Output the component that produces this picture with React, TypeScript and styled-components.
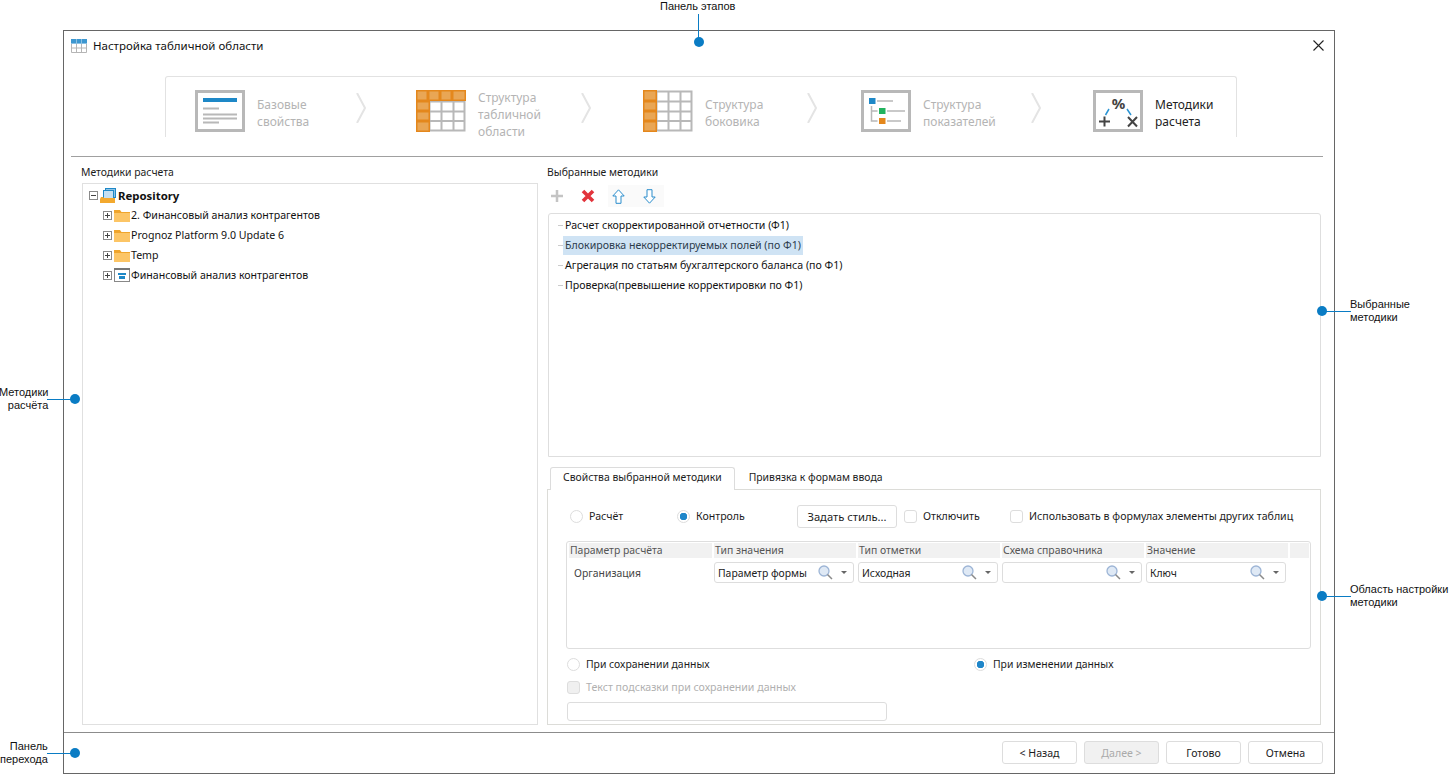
import styled, { createGlobalStyle } from 'styled-components';

const GlobalStyle = createGlobalStyle`
  html, body {
    margin: 0;
    padding: 0;
    background: #fff;
  }
  body {
    font-family: 'Noto Sans', 'Open Sans', sans-serif;
    font-size: 10.6px;
    color: #1c1c1c;
  }
`;

const Page = styled.div`
  position: relative;
  width: 1449px;
  height: 774px;
  overflow: hidden;
  padding: 30px 0 0 63px;
  box-sizing: border-box;
`;

const Dialog = styled.div`
  width: 1272px;
  height: 744px;
  box-sizing: border-box;
  border: 1px solid #666;
  display: flex;
  flex-direction: column;
`;

const TitleBar = styled.div`
  height: 31px;
  display: flex;
  align-items: center;
  gap: 6px;
  padding: 0 10px 0 7px;
  flex-shrink: 0;
`;

const TitleText = styled.span`
  flex: 1;
  font-size: 11.5px;
  line-height: 14px;
  margin-top: -2px;
  color: #111;
`;

const StepBar = styled.div`
  margin: 14px 0 0 101px;
  width: 1072px;
  height: 61px;
  box-sizing: border-box;
  border: 1px solid #e2e2e2;
  border-bottom: none;
  border-radius: 3px 3px 0 0;
  display: flex;
  padding: 13px 0 0 29px;
  flex-shrink: 0;
`;

const Step = styled.div<{ $width?: number }>`
  width: ${p => (p.$width ? `${p.$width}px` : 'auto')};
  display: flex;
  align-items: flex-start;
  gap: 12px;
  flex-shrink: 0;
`;

const StepText = styled.div<{ $active?: boolean; $tall?: boolean }>`
  font-size: 12px;
  line-height: 17px;
  color: ${p => (p.$active ? '#222' : '#b4b4b4')};
  display: flex;
  align-self: center;
  height: 51px;
  align-items: center;
  margin-top: ${p => (p.$tall ? 2 : -2)}px;
`;

const ChevronSlot = styled.div<{ $width: number }>`
  width: ${p => p.$width}px;
  flex-shrink: 0;
  padding-top: 3px;
`;

const Separator = styled.div`
  height: 1px;
  background: #a0a0a0;
  margin: 19px 11px 0 7px;
  flex-shrink: 0;
`;

const Body = styled.div`
  flex: 1;
  min-height: 0;
  display: flex;
  gap: 9px;
  padding: 8px 0 7px 17px;
`;

const LeftColumn = styled.div`
  width: 457px;
  display: flex;
  flex-direction: column;
`;

const RightColumn = styled.div`
  width: 774px;
  display: flex;
  flex-direction: column;
`;

const SectionLabel = styled.div`
  height: 18px;
  font-size: 10.4px;
  line-height: 15px;
  flex-shrink: 0;
`;

const TreeBox = styled.div`
  flex: 1;
  margin-left: 1px;
  border: 1px solid #e0e0e0;
  padding-top: 1px;
`;

const TreeRow = styled.div<{ $root?: boolean }>`
  height: 20px;
  display: flex;
  align-items: center;
  padding-left: ${p => (p.$root ? 6 : 20)}px;
  gap: 1px;
  font-size: ${p => (p.$root ? '11.4px' : 'inherit')};
  font-weight: ${p => (p.$root ? 700 : 400)};
  color: #111;
`;

const Expander = styled.span`
  width: 9px;
  height: 9px;
  box-sizing: border-box;
  border: 1px solid #8a8a8a;
  flex-shrink: 0;
  margin-right: 1px;
  display: block;
  background: linear-gradient(#444, #444) center / 5px 1px no-repeat;
`;

const ExpanderPlus = styled(Expander)`
  background:
    linear-gradient(#444, #444) center / 5px 1px no-repeat,
    linear-gradient(#444, #444) center / 1px 5px no-repeat;
`;

const Toolbar = styled.div`
  height: 30px;
  flex-shrink: 0;
  display: flex;
  align-items: center;
  padding-bottom: 4px;
  box-sizing: border-box;
`;

const ToolButton = styled.span<{ $soft?: boolean; $width: number; $pad: number }>`
  width: ${p => p.$width}px;
  height: 22px;
  display: flex;
  align-items: center;
  padding-left: ${p => p.$pad}px;
  box-sizing: border-box;
  background: ${p => (p.$soft ? '#fafafa' : 'transparent')};
`;

const ListBox = styled.div`
  height: 244px;
  margin-left: 1px;
  flex-shrink: 0;
  box-sizing: border-box;
  border: 1px solid #dedede;
  border-radius: 3px 3px 0 0;
  padding: 1px 0 0 9px;
`;

const ListRow = styled.div`
  height: 20px;
  display: flex;
  align-items: center;
  color: #111;
`;

const Dash = styled.span`
  width: 5px;
  height: 1px;
  background: #ccc;
  flex-shrink: 0;
`;

const ListText = styled.span<{ $selected?: boolean }>`
  padding: 2px 2px;
  line-height: 15px;
  background: ${p => (p.$selected ? '#cfe3f4' : 'transparent')};
  color: ${p => (p.$selected ? '#2c3c4c' : '#111')};
`;

const TabBar = styled.div`
  margin-top: 10px;
  height: 22px;
  padding-left: 3px;
  display: flex;
  flex-shrink: 0;
`;

const Tab = styled.div<{ $active?: boolean }>`
  box-sizing: border-box;
  height: ${p => (p.$active ? 23 : 22)}px;
  padding: 0 ${p => (p.$active ? 12 : 13)}px;
  font-size: 10.4px;
  line-height: 18px;
  background: #fff;
  position: relative;
  z-index: 1;
  border: ${p => (p.$active ? '1px solid #dcdcdc' : '1px solid transparent')};
  border-bottom: none;
  border-radius: 3px 3px 0 0;
`;

const Panel = styled.div`
  flex: 1;
  min-height: 0;
  border: 1px solid #dcdcd8;
  padding: 15px 0 0 18px;
`;

const OptionsRow = styled.div`
  display: flex;
  align-items: center;
  height: 23px;
  padding-left: 4px;
`;

const OptionLabel = styled.span<{ $raised?: boolean }>`
  line-height: 13px;
  margin-top: ${p => (p.$raised ? -1 : 0)}px;
`;

const Option = styled.label<{ $width?: number; $muted?: boolean; $small?: boolean }>`
  display: flex;
  align-items: center;
  gap: 6px;
  flex-shrink: 0;
  width: ${p => (p.$width ? `${p.$width}px` : 'auto')};
  font-size: ${p => (p.$small ? '10.4px' : 'inherit')};
  color: ${p => (p.$muted ? '#b0b0b0' : '#1c1c1c')};
`;

const RadioMark = styled.span<{ $on?: boolean }>`
  width: 13px;
  height: 13px;
  box-sizing: border-box;
  border-radius: 50%;
  border: 1px solid #ddd;
  background: ${p => (p.$on ? 'radial-gradient(circle, #1f86c9 0 3.5px, #fff 4px)' : '#fff')};
  flex-shrink: 0;
`;

const CheckMark = styled.span<{ $disabled?: boolean }>`
  width: 13px;
  height: 13px;
  box-sizing: border-box;
  border-radius: 3px;
  border: 1px solid #ddd;
  background: ${p => (p.$disabled ? '#f0f0f0' : '#fff')};
  flex-shrink: 0;
`;

const StyleButton = styled.div`
  width: 100px;
  height: 23px;
  box-sizing: border-box;
  border: 1px solid #ddd;
  border-radius: 3px;
  display: flex;
  align-items: center;
  justify-content: center;
  margin-right: 7px;
  flex-shrink: 0;
  font-size: 11.2px;
`;

const ParamGrid = styled.div`
  margin-top: 13px;
  width: 745px;
  height: 108px;
  box-sizing: border-box;
  border: 1px solid #dedede;
  border-radius: 3px;
  padding: 1px 1px 0 2px;
  font-size: 10.4px;
`;

const GridRow = styled.div`
  display: grid;
  grid-template-columns: 143px 142px 142px 142px 142px 1fr;
  column-gap: 2px;
`;

const HeaderCell = styled.div`
  height: 15px;
  line-height: 15px;
  background: #f1f1f1;
  padding-left: 1px;
  color: #555;
`;

const BodyRow = styled(GridRow)`
  margin-top: 4px;
  align-items: center;
`;

const ParamName = styled.div`
  padding-left: 5px;
  color: #444;
`;

const Combo = styled.div`
  width: 140px;
  height: 21px;
  box-sizing: border-box;
  border: 1px solid #ddd;
  border-radius: 3px;
  display: flex;
  align-items: center;
  padding: 0 6px 0 3px;
  color: #222;
`;

const ComboValue = styled.span`
  flex: 1;
  white-space: nowrap;
`;

const ComboArrow = styled.span`
  width: 0;
  height: 0;
  margin-left: 8px;
  border-left: 3px solid transparent;
  border-right: 3px solid transparent;
  border-top: 3px solid #666;
`;

const TriggerRow = styled.div`
  margin-top: 6px;
  height: 18px;
  display: flex;
  align-items: center;
  padding-left: 1px;
`;

const HintRow = styled(TriggerRow)`
  margin-top: 5px;
`;

const HintInput = styled.div`
  margin: 6px 0 0 1px;
  width: 320px;
  height: 19px;
  box-sizing: border-box;
  border: 1px solid #ddd;
  border-radius: 3px;
`;

const Footer = styled.div`
  height: 41px;
  flex-shrink: 0;
  box-sizing: border-box;
  border-top: 1px solid #8c8c8c;
  display: flex;
  justify-content: flex-end;
  gap: 7px;
  padding: 8px 11px 0 0;
`;

const FooterButton = styled.div<{ $disabled?: boolean }>`
  width: 75px;
  height: 23px;
  box-sizing: border-box;
  border: 1px solid #ddd;
  border-radius: 3px;
  display: flex;
  align-items: center;
  justify-content: center;
  background: ${p => (p.$disabled ? '#f1f1f1' : '#fff')};
  color: ${p => (p.$disabled ? '#aaa' : '#1c1c1c')};
`;

const Callout = styled.div<{ $x: number; $y: number; $right?: boolean }>`
  position: absolute;
  left: ${p => p.$x}px;
  top: ${p => p.$y}px;
  font-family: 'Liberation Sans', Arial, sans-serif;
  font-size: 11px;
  line-height: 13px;
  color: #111;
  text-align: ${p => (p.$right ? 'right' : 'left')};
  white-space: nowrap;
`;

const Dot = styled.span<{ $x: number; $y: number }>`
  position: absolute;
  left: ${p => p.$x - 5}px;
  top: ${p => p.$y - 5}px;
  width: 10px;
  height: 10px;
  border-radius: 50%;
  background: #0a7cc4;
`;

const Leader = styled.span<{ $x: number; $y: number; $w: number; $h: number }>`
  position: absolute;
  left: ${p => p.$x}px;
  top: ${p => p.$y}px;
  width: ${p => p.$w}px;
  height: ${p => p.$h}px;
  background: #0a7cc4;
`;

const TableTitleIcon = () => (
  <svg width="16" height="14" viewBox="0 0 16 14" style={{ marginTop: -2 }}>
    <rect x="0" y="0" width="16" height="5" fill="#3d97d0" />
    <path d="M.5 5v8.5h15V5M.5 9h15M5.5 5v8.5M10.5 5v8.5" fill="none" stroke="#b5b5b5" />
    <path d="M5.5 0v5M10.5 0v5M0 4.5h16" stroke="#8cc0e2" />
  </svg>
);

const CloseIcon = () => (
  <svg width="11" height="11" viewBox="0 0 11 11" style={{ marginTop: -2 }}>
    <path d="M.5.5l10 10M10.5.5l-10 10" stroke="#222" strokeWidth="1.1" />
  </svg>
);

const Chevron = () => (
  <svg width="10" height="30" viewBox="0 0 10 30">
    <path d="M1 0l8 15-8 15" fill="none" stroke="#e4e4e4" strokeWidth="2" />
  </svg>
);

const IconFrame = ({ children }: { children: React.ReactNode }) => (
  <svg width="50" height="42" viewBox="0 0 50 42" style={{ flexShrink: 0 }}>
    {children}
  </svg>
);

const PropertiesIcon = () => (
  <IconFrame>
    <rect x="1.5" y="1.5" width="47" height="39" fill="#fff" stroke="#b8b8b8" strokeWidth="3" />
    <rect x="8" y="8" width="34" height="4" fill="#1e88c7" />
    <path d="M8 18.5h16M8 24.5h34M8 28.5h34M8 32.5h16" stroke="#b8b8b8" strokeWidth="2" />
  </IconFrame>
);

const GridLines = () => (
  <path
    d="M1.5 1.5h47v39h-47zM1.5 11.5h47M1.5 21.5h47M1.5 31h47M13.5 1.5v39M25.500 1.5v39M37.5 1.5v39"
    fill="#fff"
    stroke="#b8b8b8"
    strokeWidth="2"
  />
);

const OrangeCell = ({ x, y, w, h }: { x: number; y: number; w: number; h: number }) => (
  <rect x={x + 0.75} y={y + 0.75} width={w - 1.5} height={h - 1.5} fill="#e9a655" stroke="#e4871c" strokeWidth="1.5" />
);

const TableIcon = () => (
  <IconFrame>
    <GridLines />
    {[0, 12, 24, 36].map(x => (
      <OrangeCell key={x} x={x} y={0} w={x === 36 ? 14 : 12} h={11} />
    ))}
    {[11, 21, 31].map(y => (
      <OrangeCell key={y} x={0} y={y} w={14} h={y === 31 ? 11 : 10} />
    ))}
  </IconFrame>
);

const SideTableIcon = () => (
  <IconFrame>
    <GridLines />
    {[0, 11, 21, 31].map(y => (
      <OrangeCell key={y} x={0} y={y} w={14} h={y === 0 || y === 31 ? 11 : 10} />
    ))}
  </IconFrame>
);

const HierarchyIcon = () => (
  <IconFrame>
    <rect x="1.5" y="1.5" width="47" height="39" fill="#fff" stroke="#b8b8b8" strokeWidth="3" />
    <rect x="8" y="8" width="6.5" height="6" fill="#1e88c7" />
    <rect x="18" y="18" width="6.5" height="6" fill="#22b35e" />
    <rect x="18" y="28" width="6.5" height="6" fill="#e4871c" />
    <path d="M16 11h16M26 21h18M26 31h14M10.5 16v15h6M10.5 21h6" fill="none" stroke="#b8b8b8" strokeWidth="1.5" />
  </IconFrame>
);

const CalcIcon = () => (
  <IconFrame>
    <rect x="1.5" y="1.5" width="47" height="39" fill="#fff" stroke="#b8b8b8" strokeWidth="3" />
    <text x="25.5" y="18.500" textAnchor="middle" fontFamily="'Noto Sans', sans-serif" fontWeight="700" fontSize="15" fill="#444">%</text>
    <path d="M16 19l-3.500 6M34 19l4 6" stroke="#2a94d4" strokeWidth="1.5" />
    <path d="M6 31.500h11M11.500 26.500v10M35 27l9 9.500M44 27l-9 9.500" stroke="#444" strokeWidth="2" />
  </IconFrame>
);

const FolderIcon = () => (
  <svg width="16" height="13" viewBox="0 0 16 13" style={{ flexShrink: 0 }}>
    <path d="M0 2h6l1 1.500h9V13H0z" fill="#fcc566" />
    <path d="M0 1h6l1.500 2H16v1H0z" fill="#f0a52c" />
  </svg>
);

const RepositoryIcon = () => (
  <svg width="16" height="15" viewBox="0 0 16 15" style={{ flexShrink: 0, marginRight: 1 }}>
    <rect x="5.500" y="0.500" width="10" height="9" fill="#8cc3e6" stroke="#1e88c7" />
    <rect x="3.500" y="2.500" width="10" height="9" fill="#c5e0f2" stroke="#1e88c7" />
    <path d="M0 11l1-2h2l1 1h11v5H0z" fill="#f3a92f" />
  </svg>
);

const CubeFrameIcon = () => (
  <svg width="16" height="14" viewBox="0 0 16 14" style={{ flexShrink: 0 }}>
    <rect x="0.500" y="0.500" width="15" height="13" fill="#fff" stroke="#888" />
    <rect x="0" y="0" width="16" height="2" fill="#777" />
    <rect x="4" y="5" width="8" height="2" fill="#1e88c7" />
    <rect x="5" y="8" width="6" height="3" fill="#1e88c7" />
  </svg>
);

const PlusIcon = () => (
  <svg width="12" height="12" viewBox="0 0 12 12">
    <path d="M6 0v12M0 6h12" stroke="#c4c4c4" strokeWidth="2.500" />
  </svg>
);

const RemoveIcon = () => (
  <svg width="14" height="14" viewBox="0 0 14 14">
    <path d="M2 2l10 10M12 2L2 12" stroke="#e2343c" strokeWidth="3.600" />
  </svg>
);

const UpIcon = () => (
  <svg width="13" height="15" viewBox="0 0 13 15">
    <path d="M6.500.8L12.200 7H9v7.300H4V7H.8z" fill="#fff" stroke="#2a8dcc" />
  </svg>
);

const DownIcon = () => (
  <svg width="13" height="15" viewBox="0 0 13 15">
    <path d="M6.500 14.200L12.200 8H9V.7H4V8H.8z" fill="#fff" stroke="#2a8dcc" />
  </svg>
);

const SearchIcon = () => (
  <svg width="15" height="15" viewBox="0 0 15 15" style={{ flexShrink: 0 }}>
    <circle cx="6" cy="6" r="5" fill="#dfe9f5" stroke="#9db5d6" strokeWidth="1.300" />
    <path d="M9.500 9.500l4.500 4.500" stroke="#8a8a8a" strokeWidth="1.500" />
  </svg>
);

const columns = ['Параметр расчёта', 'Тип значения', 'Тип отметки', 'Схема справочника', 'Значение', ''];
const combos = ['Параметр формы', 'Исходная', '', 'Ключ'];
const methods = [
  'Расчет скорректированной отчетности (Ф1)',
  'Блокировка некорректируемых полей (по Ф1)',
  'Агрегация по статьям бухгалтерского баланса (по Ф1)',
  'Проверка(превышение корректировки по Ф1)',
];

export default function App() {
  return (
    <Page>
      <GlobalStyle />
      <Dialog>
        <TitleBar>
          <TableTitleIcon />
          <TitleText>Настройка табличной области</TitleText>
          <CloseIcon />
        </TitleBar>

        <StepBar>
          <Step $width={161}>
            <PropertiesIcon />
            <StepText>Базовые<br />свойства</StepText>
          </Step>
          <ChevronSlot $width={60}><Chevron /></ChevronSlot>
          <Step $width={165}>
            <TableIcon />
            <StepText $tall>Структура<br />табличной<br />области</StepText>
          </Step>
          <ChevronSlot $width={62}><Chevron /></ChevronSlot>
          <Step $width={164}>
            <SideTableIcon />
            <StepText>Структура<br />боковика</StepText>
          </Step>
          <ChevronSlot $width={54}><Chevron /></ChevronSlot>
          <Step $width={170}>
            <HierarchyIcon />
            <StepText>Структура<br />показателей</StepText>
          </Step>
          <ChevronSlot $width={62}><Chevron /></ChevronSlot>
          <Step>
            <CalcIcon />
            <StepText $active>Методики<br />расчета</StepText>
          </Step>
        </StepBar>

        <Separator />

        <Body>
          <LeftColumn>
            <SectionLabel>Методики расчета</SectionLabel>
            <TreeBox>
              <TreeRow $root>
                <Expander />
                <RepositoryIcon />
                Repository
              </TreeRow>
              <TreeRow><ExpanderPlus /><FolderIcon />2. Финансовый анализ контрагентов</TreeRow>
              <TreeRow><ExpanderPlus /><FolderIcon />Prognoz Platform 9.0 Update 6</TreeRow>
              <TreeRow><ExpanderPlus /><FolderIcon />Temp</TreeRow>
              <TreeRow><ExpanderPlus /><CubeFrameIcon />Финансовый анализ контрагентов</TreeRow>
            </TreeBox>
          </LeftColumn>

          <RightColumn>
            <SectionLabel>Выбранные методики</SectionLabel>
            <Toolbar>
              <ToolButton $width={34} $pad={4}><PlusIcon /></ToolButton>
              <ToolButton $width={27} $pad={0}><RemoveIcon /></ToolButton>
              <ToolButton $soft $width={35} $pad={4}><UpIcon /></ToolButton>
              <ToolButton $soft $width={21} $pad={0}><DownIcon /></ToolButton>
            </Toolbar>
            <ListBox>
              {methods.map((m, i) => (
                <ListRow key={m}>
                  <Dash />
                  <ListText $selected={i === 1}>{m}</ListText>
                </ListRow>
              ))}
            </ListBox>
            <TabBar>
              <Tab $active>Свойства выбранной методики</Tab>
              <Tab>Привязка к формам ввода</Tab>
            </TabBar>
            <Panel>
              <OptionsRow>
                <Option $width={107}><RadioMark /><OptionLabel $raised>Расчёт</OptionLabel></Option>
                <Option $width={120}><RadioMark $on /><OptionLabel $raised>Контроль</OptionLabel></Option>
                <StyleButton>Задать стиль...</StyleButton>
                <Option $width={106}><CheckMark /><OptionLabel $raised>Отключить</OptionLabel></Option>
                <Option><CheckMark /><OptionLabel $raised>Использовать в формулах элементы других таблиц</OptionLabel></Option>
              </OptionsRow>
              <ParamGrid>
                <GridRow>
                  {columns.map((c, i) => <HeaderCell key={i}>{c}</HeaderCell>)}
                </GridRow>
                <BodyRow>
                  <ParamName>Организация</ParamName>
                  {combos.map((c, i) => (
                    <Combo key={i}>
                      <ComboValue>{c}</ComboValue>
                      <SearchIcon />
                      <ComboArrow />
                    </Combo>
                  ))}
                </BodyRow>
              </ParamGrid>
              <TriggerRow>
                <Option $small $width={407}><RadioMark /><OptionLabel>При сохранении данных</OptionLabel></Option>
                <Option $small><RadioMark $on /><OptionLabel>При изменении данных</OptionLabel></Option>
              </TriggerRow>
              <HintRow>
                <Option $muted><CheckMark $disabled /><OptionLabel>Текст подсказки при сохранении данных</OptionLabel></Option>
              </HintRow>
              <HintInput />
            </Panel>
          </RightColumn>
        </Body>

        <Footer>
          <FooterButton>&lt; Назад</FooterButton>
          <FooterButton $disabled>Далее &gt;</FooterButton>
          <FooterButton>Готово</FooterButton>
          <FooterButton>Отмена</FooterButton>
        </Footer>
      </Dialog>

      <Callout $x={660} $y={0}>Панель этапов</Callout>
      <Leader $x={698} $y={14} $w={1} $h={28} />
      <Dot $x={699} $y={42} />

      <Callout $x={-1} $y={386} $right>Методики<br />расчёта</Callout>
      <Leader $x={47} $y={399} $w={26} $h={1} />
      <Dot $x={75} $y={399} />

      <Callout $x={0} $y={740} $right>Панель<br />перехода</Callout>
      <Leader $x={47} $y={753} $w={26} $h={1} />
      <Dot $x={75} $y={753} />

      <Callout $x={1350} $y={298}>Выбранные<br />методики</Callout>
      <Leader $x={1324} $y={311} $w={27} $h={1} />
      <Dot $x={1322} $y={311} />

      <Callout $x={1350} $y={583}>Область настройки<br />методики</Callout>
      <Leader $x={1324} $y={596} $w={27} $h={1} />
      <Dot $x={1322} $y={596} />
    </Page>
  );
}
